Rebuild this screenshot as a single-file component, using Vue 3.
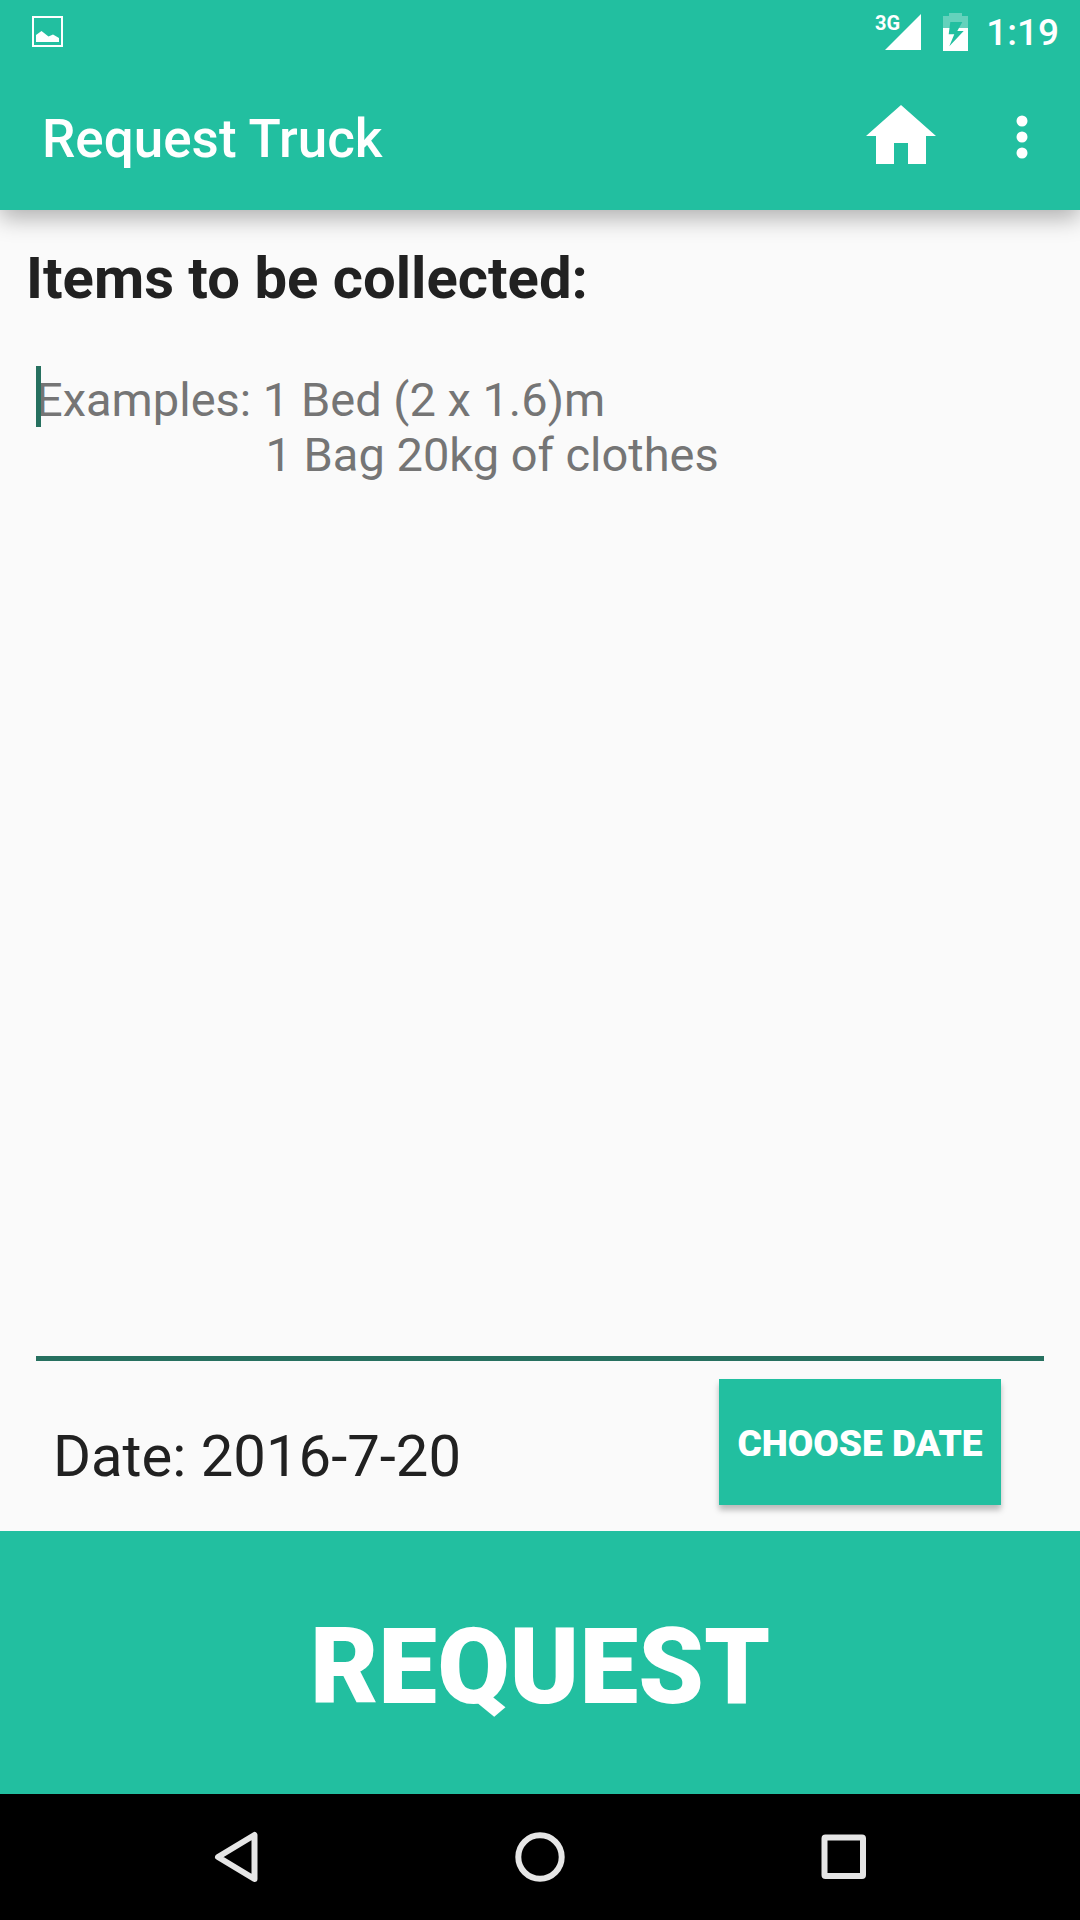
<script setup>
import { ref } from 'vue'

const items = ref('')
const hint = 'Examples: 1 Bed (2 x 1.6)m\n' + ' '.repeat(19) + '\u20061 Bag 20kg of clothes'
const date = ref('2016-7-20')
</script>

<template>
  <div class="screen">
    <header class="top">
      <div class="status">
        <svg class="picture" width="32" height="32" viewBox="0 0 32 32" aria-hidden="true">
          <rect x="1" y="1" width="29" height="29" fill="none" stroke="#fff" stroke-width="2" />
          <path d="M4 26V19L9.500 15L16.500 20.500L21 18.500L27 22V26Z" fill="#fff" />
        </svg>
        <div class="indicators">
          <div class="signal">
            <span class="network">3G</span>
            <svg width="36" height="36" viewBox="0 0 36 36" aria-hidden="true">
              <path d="M36 0V36H0Z" fill="#fff" />
            </svg>
          </div>
          <svg class="battery" width="25" height="38" viewBox="0 0 25 38" aria-hidden="true">
            <path d="M6 0H19V3H25V15H0V3H6Z" fill="#fff" opacity=".3" />
            <path d="M0 15H25V38H0Z" fill="#fff" />
            <path d="M7.300 9H19.300L14.300 18H20.700L6.300 33.300L11.300 21.300H5.700Z" fill="#22bfa0" />
          </svg>
          <span class="clock">1:19</span>
        </div>
      </div>
      <div class="bar">
        <h1>Request Truck</h1>
        <button class="icon home" type="button" aria-label="Home">
          <svg width="70" height="64" viewBox="0 0 70 64">
            <path d="M35 0L70 31H60V59H42V38H28V59H10V31H0Z" fill="#fff" />
          </svg>
        </button>
        <button class="icon more" type="button" aria-label="More options">
          <svg width="12" height="44" viewBox="0 0 12 44" fill="#fff">
            <circle cx="6" cy="6" r="5.500" />
            <circle cx="6" cy="22" r="5.500" />
            <circle cx="6" cy="38" r="5.500" />
          </svg>
        </button>
      </div>
    </header>

    <main>
      <label class="heading" for="items">Items to be collected:</label>
      <div class="field">
        <textarea id="items" v-model="items" :placeholder="hint"></textarea>
        <span v-if="!items" class="caret"></span>
      </div>
      <div class="date-row">
        <p>Date: {{ date }}</p>
        <button class="choose" type="button">CHOOSE DATE</button>
      </div>
    </main>

    <button class="request" type="button">REQUEST</button>

    <nav>
      <button class="icon" type="button" aria-label="Back">
        <svg width="50" height="52" viewBox="0 0 50 52">
          <path d="M43.500 4V48L7 26Z" />
        </svg>
      </button>
      <button class="icon" type="button" aria-label="Home screen">
        <svg width="50" height="52" viewBox="0 0 50 52">
          <circle cx="25" cy="26" r="21.700" />
        </svg>
      </button>
      <button class="icon" type="button" aria-label="Recent apps">
        <svg width="50" height="52" viewBox="0 0 50 52">
          <rect x="5.500" y="6.500" width="38.500" height="38.500" rx="1" />
        </svg>
      </button>
    </nav>
  </div>
</template>

<style>
body {
  margin: 0;
}
</style>

<style scoped>
.screen {
  display: flex;
  flex-direction: column;
  min-height: 100vh;
  background: #fafafa;
  color: #212121;
  font-family: Roboto, "Liberation Sans", sans-serif;
}

button {
  margin: 0;
  padding: 0;
  border: 0;
  border-radius: 0;
  background: #22bfa0;
  color: #fff;
  font-family: inherit;
  font-weight: 900;
}

svg {
  display: block;
}

.icon {
  display: flex;
  align-items: center;
  justify-content: center;
  background: transparent;
}

.top {
  background: #22bfa0;
  color: #fff;
  box-shadow: 0 8px 22px rgba(0, 0, 0, 0.3);
}

.status {
  display: flex;
  align-items: center;
  justify-content: space-between;
  height: 63px;
  padding: 0 21px 0 32px;
}

.indicators {
  display: flex;
  align-items: center;
}

.signal {
  position: relative;
  margin-right: 22px;
}

.network {
  position: absolute;
  right: 21px;
  top: 0;
  font-size: 20px;
  line-height: 18px;
  font-weight: 700;
}

.battery {
  margin-right: 18px;
}

.clock {
  padding-top: 2px;
  font-size: 37px;
  line-height: 44px;
  font-weight: 500;
}

.bar {
  display: flex;
  align-items: center;
  height: 147px;
  padding: 0 32px 0 42px;
}

h1 {
  flex: 1;
  margin: 0;
  padding-top: 4px;
  font-size: 53px;
  line-height: 62px;
  font-weight: 500;
}

.home {
  width: 126px;
  height: 126px;
}

.more {
  width: 52px;
  height: 126px;
  margin-left: 32px;
}

main {
  display: flex;
  flex: 1;
  flex-direction: column;
  padding-top: 34px;
}

.heading {
  padding: 0 26px;
  font-size: 58px;
  line-height: 68px;
  font-weight: 700;
}

.field {
  position: relative;
  display: flex;
  flex: 1;
  margin: 54px 36px 0;
  border-bottom: 5px solid #26705f;
}

textarea {
  flex: 1;
  padding: 6px 0;
  border: 0;
  outline: 0;
  resize: none;
  background: transparent;
  color: #212121;
  font-family: inherit;
  font-size: 47px;
  line-height: 55px;
}

textarea::placeholder {
  color: #757575;
  opacity: 1;
}

.caret {
  position: absolute;
  left: 0;
  top: 0;
  width: 5px;
  height: 61px;
  background: #26705f;
}

.date-row {
  display: flex;
  align-items: flex-start;
  justify-content: space-between;
  padding: 18px 79px 26px 53px;
}

.date-row p {
  margin: 43px 0 0;
  font-size: 58px;
  line-height: 68px;
}

.choose {
  width: 282px;
  height: 126px;
  padding-top: 2px;
  font-size: 37px;
  box-shadow: 0 5px 6px rgba(0, 0, 0, 0.26);
}

.request {
  height: 263px;
  padding-top: 10px;
  font-size: 105px;
}

nav {
  display: grid;
  grid-template-columns: repeat(3, 304px);
  justify-content: center;
  height: 126px;
  background: #000;
}

nav svg {
  fill: none;
  stroke: #e6e6e6;
  stroke-width: 6;
  stroke-linejoin: round;
}
</style>
